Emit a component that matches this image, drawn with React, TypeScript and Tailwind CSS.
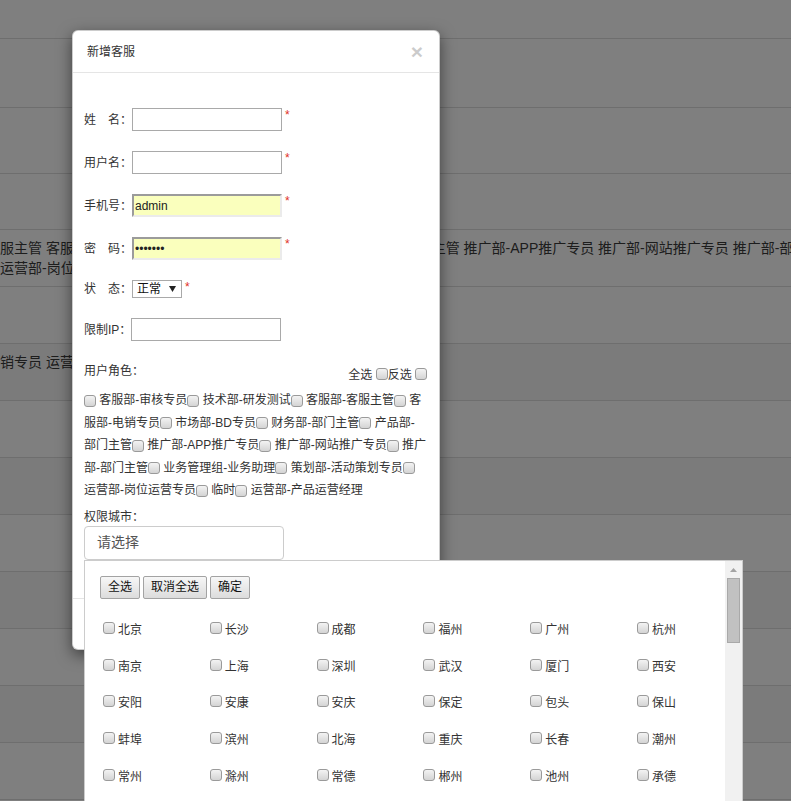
import React from 'react';

const FONT = "font-['Liberation_Sans','Noto_Sans_CJK_SC',sans-serif]";

const Box = ({ className = '' }: { className?: string }) => (
  <input
    type="checkbox"
    readOnly
    className={`appearance-none w-[12px] h-[12px] m-0 rounded-[3px] border border-[#9a9a9a] bg-linear-to-b from-[#f3f3f3] to-[#d4d4d4] align-middle ${className}`}
  />
);

const Star = () => <span className="ml-[3px] self-start text-[12px] leading-[14px] text-[#e0301e]">*</span>;

// background table behind the overlay
const bgRows: { h: string; lines?: string[]; dark?: boolean }[] = [
  { h: 'h-[39px]' },
  { h: 'h-[69px]' },
  { h: 'h-[66px]' },
  { h: 'h-[56px]' },
  {
    h: 'h-[57px]',
    lines: [
      '服主管 客服部-电销专员 市场部-BD专员 财务部-部门主管 产品部-部门主管 推广部-APP推广专员 推广部-网站推广专员 推广部-部门主管 业务管理组-业务助理',
      '运营部-岗位运营专员 临时 运营部-产品运营经理',
    ],
  },
  { h: 'h-[57px]' },
  { h: 'h-[57px]', dark: true, lines: ['销专员 运营部-岗位运营专员'] },
  { h: 'h-[57px]' },
  { h: 'h-[57px]', dark: true },
  { h: 'h-[57px]' },
  { h: 'h-[57px]', dark: true },
  { h: 'h-[57px]' },
  { h: 'h-[57px]', dark: true },
  { h: 'h-[57px]' },
];

const cities = [
  ['北京', '长沙', '成都', '福州', '广州', '杭州'],
  ['南京', '上海', '深圳', '武汉', '厦门', '西安'],
  ['安阳', '安康', '安庆', '保定', '包头', '保山'],
  ['蚌埠', '滨州', '北海', '重庆', '长春', '潮州'],
  ['常州', '滁州', '常德', '郴州', '池州', '承德'],
];

const TextInput = ({ value = '', type = 'text', filled = false }: { value?: string; type?: string; filled?: boolean }) => (
  <input
    type={type}
    defaultValue={value}
    className={
      filled
        ? 'h-[23px] w-[150px] border-2 border-t-[#9b9b9b] border-l-[#9b9b9b] border-b-[#ebebeb] border-r-[#ebebeb] bg-[#faffbd] px-[1px] text-[12px] text-[#222] outline-none'
        : 'h-[23px] w-[150px] border border-[#a9a9a9] bg-white px-[2px] text-[12px] text-[#222] outline-none'
    }
  />
);

const Btn = ({ children }: { children: React.ReactNode }) => (
  <button className="h-[23px] px-[7px] rounded-[2px] border border-[#a3a3a3] bg-linear-to-b from-[#f7f7f7] to-[#dcdcdc] text-[12px] leading-none text-[#111]">
    {children}
  </button>
);

export default function App() {
  return (
    <div className={`relative h-[801px] w-full overflow-hidden bg-white ${FONT}`}>
      {/* page table */}
      <div className="flex flex-col">
        {bgRows.map((r, i) => (
          <div
            key={i}
            className={`${r.h} shrink-0 border-b border-[#dddddd] ${r.dark ? 'bg-[#f7f7f7]' : 'bg-white'} pt-[8px] overflow-hidden`}
          >
            {r.lines?.map((l, j) => (
              <div key={j} className="whitespace-nowrap text-[14px] leading-[20px] text-[#3a3a3a]">
                {l}
              </div>
            ))}
          </div>
        ))}
      </div>

      {/* backdrop */}
      <div className="absolute inset-0 bg-black/50" />

      {/* modal */}
      <div className="absolute left-[72px] top-[30px] w-[368px] rounded-[6px] border border-black/20 bg-white shadow-[0_5px_15px_rgba(0,0,0,0.5)] text-[12px] text-[#333]">
        <div className="flex h-[42px] items-center justify-between border-b border-[#e5e5e5] pl-[14px] pr-[16px]">
          <span className="text-[12px] text-[#333]">新增客服</span>
          <span className="text-[21px] font-bold leading-none text-black opacity-20">×</span>
        </div>

        <div className="px-[11px] pt-[35px] pb-[38px]">
          <div className="flex flex-col gap-5">
            <div className="flex h-[23px] items-center">
              <span>姓　名：</span>
              <TextInput />
              <Star />
            </div>
            <div className="flex h-[23px] items-center">
              <span>用户名：</span>
              <TextInput />
              <Star />
            </div>
            <div className="flex h-[23px] items-center">
              <span>手机号：</span>
              <TextInput value="admin" filled />
              <Star />
            </div>
            <div className="flex h-[23px] items-center">
              <span>密　码：</span>
              <TextInput value="1234567" type="password" filled />
              <Star />
            </div>
            <div className="flex h-[18px] items-center">
              <span>状　态：</span>
              <div className="flex h-[18px] w-[50px] items-center justify-between border border-[#a9a9a9] bg-white pl-[4px] pr-[5px] text-[12px] text-[#111]">
                <span>正常</span>
                <svg width="7" height="6" viewBox="0 0 7 6">
                  <path d="M0 0 L7 0 L3.5 6 Z" fill="#222" />
                </svg>
              </div>
              <Star />
            </div>
            <div className="flex h-[23px] items-center">
              <span>限制IP：</span>
              <TextInput />
            </div>
          </div>

          {/* roles */}
          <div className="mt-[19px] flex justify-between">
            <span className="leading-[22px]">用户角色：</span>
            <span className="mt-[4px] whitespace-nowrap pr-[1px] leading-[22px]">
              全选 <Box className="-mt-[3px]" />反选 <Box className="-mt-[3px]" />
            </span>
          </div>
          <div className="mt-[3px] leading-[22.5px] whitespace-nowrap">
            <div>
              <Box /> 客服部-审核专员<Box /> 技术部-研发测试<Box /> 客服部-客服主管<Box /> 客
            </div>
            <div>
              服部-电销专员<Box /> 市场部-BD专员<Box /> 财务部-部门主管<Box /> 产品部-
            </div>
            <div>
              部门主管<Box /> 推广部-APP推广专员<Box /> 推广部-网站推广专员<Box /> 推广
            </div>
            <div>
              部-部门主管<Box /> 业务管理组-业务助理<Box /> 策划部-活动策划专员<Box />
            </div>
            <div>
              运营部-岗位运营专员<Box /> 临时<Box /> 运营部-产品运营经理
            </div>
          </div>

          {/* city picker */}
          <div className="mt-[6px] leading-[18px]">权限城市：</div>
          <div className="relative w-[200px]">
            <div className="flex h-[34px] items-center rounded-[4px] border border-[#cccccc] bg-white pl-[12px] text-[14px] text-[#555]">
              请选择
            </div>
            <div className="absolute left-0 top-full z-10 flex h-[260px] w-[659px] border border-[#cccccc] bg-white">
              <div className="min-w-0 flex-1 overflow-hidden pl-[15px] pt-[15px]">
                <div className="flex gap-[3px]">
                  <Btn>全选</Btn>
                  <Btn>取消全选</Btn>
                  <Btn>确定</Btn>
                </div>
                <div className="mt-[13px] grid grid-cols-[repeat(6,106.8px)]">
                  {cities.flat().map((c) => (
                    <label key={c} className="flex h-[36.75px] items-center text-[12px] text-[#333]">
                      <Box className="mb-[4px] ml-[3px] mr-[3px]" />
                      {c}
                    </label>
                  ))}
                </div>
              </div>
              <div className="flex w-[17px] shrink-0 flex-col items-center bg-[#f1f1f1]">
                <svg className="mt-[7px]" width="7" height="4" viewBox="0 0 7 4">
                  <path d="M3.5 0 L7 4 L0 4 Z" fill="#a3a3a3" />
                </svg>
                <div className="mt-[6px] h-[65px] w-[13px] border border-[#a9a9a9] bg-[#c1c1c1]" />
              </div>
            </div>
          </div>
        </div>

        <div className="flex h-[51px] items-center justify-end gap-[5px] border-t border-[#e5e5e5] px-[15px]">
          <Btn>取消</Btn>
          <Btn>保存</Btn>
        </div>
      </div>
    </div>
  );
}
